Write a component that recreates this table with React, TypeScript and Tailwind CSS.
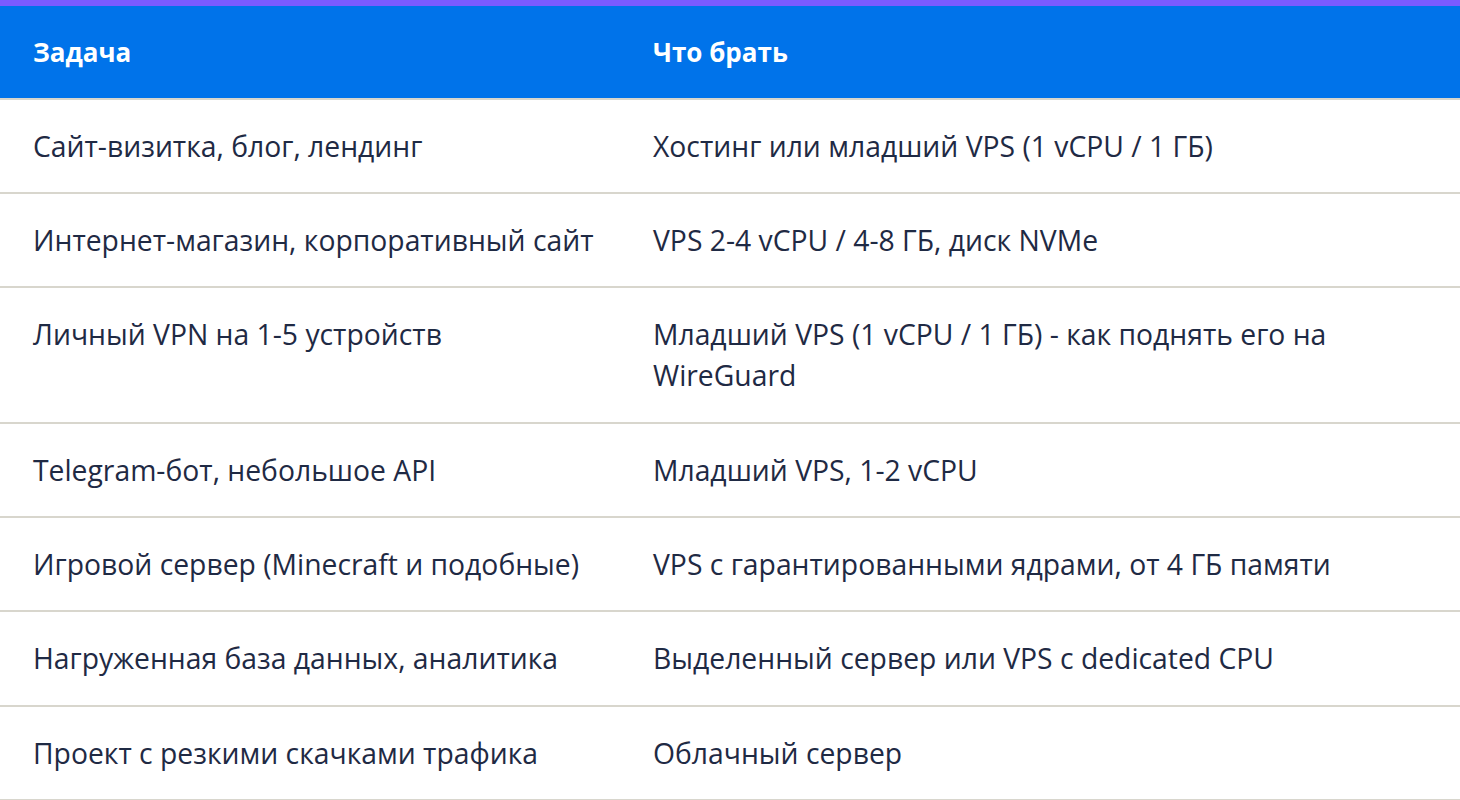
import React from "react";

const rows: [string, string][] = [
  ["Сайт-визитка, блог, лендинг", "Хостинг или младший VPS (1 vCPU / 1 ГБ)"],
  ["Интернет-магазин, корпоративный сайт", "VPS 2-4 vCPU / 4-8 ГБ, диск NVMe"],
  ["Личный VPN на 1-5 устройств", "Младший VPS (1 vCPU / 1 ГБ) - как поднять его на WireGuard"],
  ["Telegram-бот, небольшое API", "Младший VPS, 1-2 vCPU"],
  ["Игровой сервер (Minecraft и подобные)", "VPS с гарантированными ядрами, от 4 ГБ памяти"],
  ["Нагруженная база данных, аналитика", "Выделенный сервер или VPS с dedicated CPU"],
  ["Проект с резкими скачками трафика", "Облачный сервер"],
];

export default function App() {
  return (
    <div
      className="w-[1460px] bg-white text-[#1f2a44]"
      style={{ fontFamily: '"Open Sans", "Noto Sans", sans-serif' }}
    >
      <div className="h-[6px] bg-[#7b5bff]" />
      <table className="w-full border-collapse table-fixed text-[28.3px] leading-[41px]">
        <colgroup>
          <col className="w-[620px]" />
          <col />
        </colgroup>
        <thead>
          <tr className="bg-[#0073ea] text-white border-b-2 border-[#d8d6cd] text-[26px]">
            <th className="text-left font-bold pl-[33px] pr-4 pt-[26px] pb-[24.5px]">Задача</th>
            <th className="text-left font-bold pl-[33px] pr-4 pt-[26px] pb-[24.5px]">Что брать</th>
          </tr>
        </thead>
        <tbody>
          {rows.map(([a, b]) => (
            <tr key={a} className="border-b-2 border-[#d8d6cd]">
              <td className="align-top pl-[33px] pr-4 pt-[26px] pb-[25.4px]">{a}</td>
              <td className="align-top pl-[33px] pr-[60px] pt-[26px] pb-[25.4px]">{b}</td>
            </tr>
          ))}
        </tbody>
      </table>
    </div>
  );
}
